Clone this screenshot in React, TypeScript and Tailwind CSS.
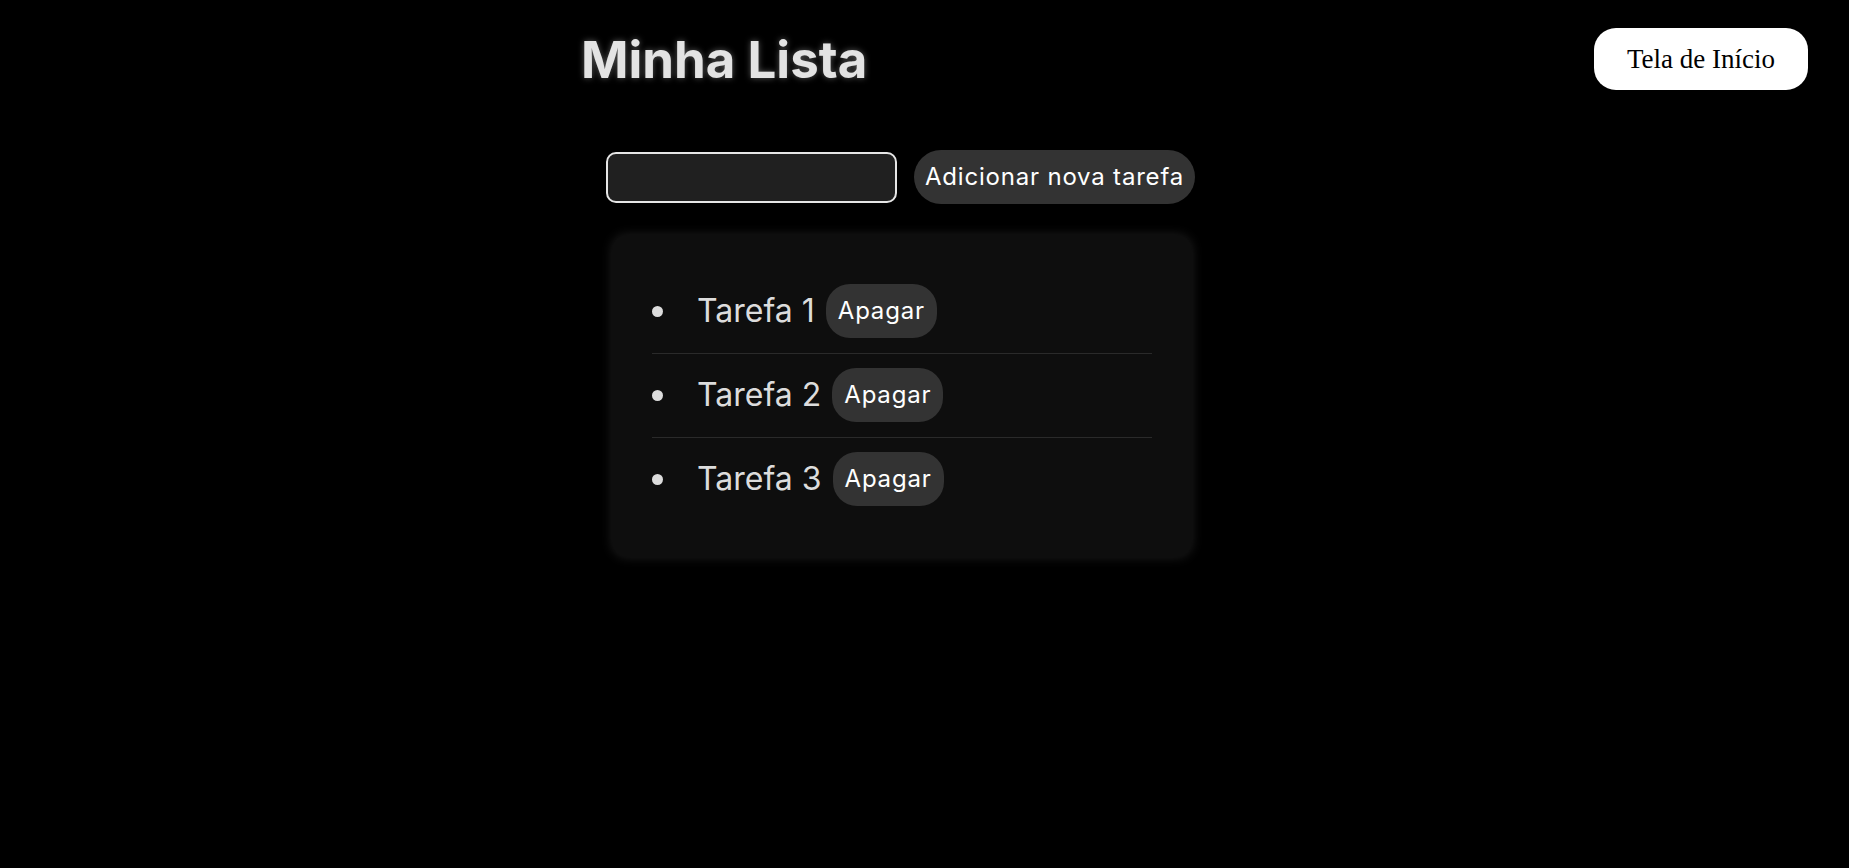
import { useState } from "react";

const sans = "font-['Inter',sans-serif]";

export default function App() {
  const [tasks, setTasks] = useState<string[]>(["Tarefa 1", "Tarefa 2", "Tarefa 3"]);
  const [text, setText] = useState("");

  const addTask = () => {
    if (!text.trim()) return;
    setTasks((prev) => [...prev, text.trim()]);
    setText("");
  };

  const removeTask = (index: number) => {
    setTasks((prev) => prev.filter((_, i) => i !== index));
  };

  return (
    <div className={`min-h-screen bg-black ${sans}`}>
      {/* HEADER */}
      <header className="flex items-center pt-[28px]">
        <h1 className="ml-[581px] text-[51px] leading-[61px] font-bold text-[#e3e3e3] [text-shadow:0_0_6px_rgba(255,255,255,0.35)]">
          Minha Lista
        </h1>
        <button className="ml-auto mr-[41px] h-[62px] w-[214px] rounded-[22px] bg-white font-['Liberation_Serif',serif] text-[27px] text-black">
          Tela de Início
        </button>
      </header>

      {/* LIST */}
      <main className="ml-[606px] mt-[60px] flex w-[589px] flex-col">
        <div className="flex items-center gap-[17px]">
          <input
            value={text}
            onChange={(e) => setText(e.target.value)}
            className="h-[51px] w-[291px] rounded-[10px] border-2 border-[#e6e6e6] bg-[#202020] px-3 text-[20px] text-white outline-none"
          />
          <button
            onClick={addTask}
            className="h-[54px] w-[281px] rounded-[28px] bg-[#333333] text-[24px] tracking-[0.8px] text-white"
          >
            Adicionar nova tarefa
          </button>
        </div>

        <div className="mt-[31px] ml-[6px] w-[580px] rounded-[15px] bg-[#0e0e0e] px-[40px] pt-[35px] pb-[36px] shadow-[0_0_12px_rgba(255,255,255,0.12)]">
          <ul>
            {tasks.map((task, i) => (
              <li
                key={i}
                className={`flex items-center pt-[14px] pb-[15px] ${
                  i < tasks.length - 1 ? "border-b border-[#2a2a2a]" : ""
                }`}
              >
                <span className="mr-[34px] h-[11px] w-[11px] rounded-full bg-[#dcdcdc]" />
                <span className="text-[32px] text-[#dcdcdc]">{task}</span>
                <button
                  onClick={() => removeTask(i)}
                  className="ml-[11px] h-[54px] w-[111px] rounded-[24px] bg-[#333333] text-[24px] tracking-[0.8px] text-white"
                >
                  Apagar
                </button>
              </li>
            ))}
          </ul>
        </div>
      </main>
    </div>
  );
}
